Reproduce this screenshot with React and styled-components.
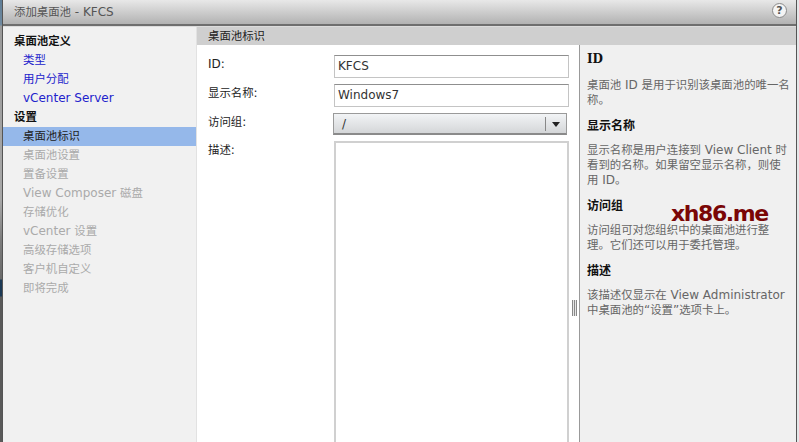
import React from "react";
import styled, { createGlobalStyle } from "styled-components";

const sans = `"DejaVu Sans", "Noto Sans CJK SC", sans-serif`;

const navItems = [
  { type: "head", text: "桌面池定义" },
  { type: "done", text: "类型" },
  { type: "done", text: "用户分配" },
  { type: "done", text: "vCenter Server" },
  { type: "head", text: "设置" },
  { type: "active", text: "桌面池标识" },
  { type: "off", text: "桌面池设置" },
  { type: "off", text: "置备设置" },
  { type: "off", text: "View Composer 磁盘" },
  { type: "off", text: "存储优化" },
  { type: "off", text: "vCenter 设置" },
  { type: "off", text: "高级存储选项" },
  { type: "off", text: "客户机自定义" },
  { type: "off", text: "即将完成" },
];

const helpItems = [
  { title: "ID", text: "桌面池 ID 是用于识别该桌面池的唯一名\n称。" },
  { title: "显示名称", text: "显示名称是用户连接到 View Client 时\n看到的名称。如果留空显示名称，则使\n用 ID。" },
  { title: "访问组", text: "访问组可对您组织中的桌面池进行整\n理。它们还可以用于委托管理。" },
  { title: "描述", text: "该描述仅显示在 View Administrator\n中桌面池的“设置”选项卡上。" },
];

// the Chinese glyphs are a little narrower than the latin text size
const T = ({ children }) =>
  children
    .split(/([\u4e00-\u9fff，。]+)/)
    .map((part, i) => (i % 2 ? <Zh key={i}>{part}</Zh> : part));

const App = () => {
  return (
    <Page>
      <GlobalStyle />
      <Dialog>
        <TitleBar>
          <Title>
            <T>添加桌面池 - KFCS</T>
          </Title>
          <HelpButton>?</HelpButton>
        </TitleBar>
        <Body>
          <Sidebar>
            {navItems.map((item) => (
              <NavItem key={item.text} $type={item.type}>
                <T>{item.text}</T>
              </NavItem>
            ))}
          </Sidebar>
          <Main>
            <SectionHeader>
              <T>桌面池标识</T>
            </SectionHeader>
            <Columns>
              <Form>
                <Label>ID:</Label>
                <TextField>KFCS</TextField>
                <Label>
                  <T>显示名称:</T>
                </Label>
                <TextField>Windows7</TextField>
                <Label>
                  <T>访问组:</T>
                </Label>
                <SelectBox>
                  <SelectValue>/</SelectValue>
                  <SelectArrow />
                </SelectBox>
                <Label>
                  <T>描述:</T>
                </Label>
                <TextArea />
              </Form>
              <Splitter>
                <Grip />
              </Splitter>
              <HelpPanel>
                {helpItems.map((item, i) => (
                  <div key={item.title}>
                    <HelpTitle $first={i === 0}>{item.title}</HelpTitle>
                    <HelpText>
                      <T>{item.text}</T>
                    </HelpText>
                  </div>
                ))}
                <Watermark>xh86.me</Watermark>
              </HelpPanel>
            </Columns>
          </Main>
        </Body>
      </Dialog>
    </Page>
  );
};

export default App;

const GlobalStyle = createGlobalStyle`
  html, body {
    margin: 0;
    padding: 0;
    height: 100%;
    overflow: hidden;
  }
  #root {
    height: 100%;
  }
`;

const Page = styled.div`
  height: 442px;
  width: 799px;
  padding: 0 2px 0 2px;
  box-sizing: border-box;
  background:
    linear-gradient(
        180deg,
        #5f7d96 0,
        #6f8aa0 25px,
        #9a9a9a 26px,
        #a8a8a8 200px,
        #7d7d7d 240px,
        #6a6a6a 279px,
        #1d3a56 280px,
        #1d3a56 296px,
        #5a5a5a 297px,
        #5a5a5a 100%
      )
      left / 2px 100% no-repeat,
    #e4e6e8;
  font-family: ${sans};
  font-size: 12px;
  overflow: hidden;
`;

const Zh = styled.span`
  font-size: 11.4px;
`;

const Dialog = styled.div`
  height: 570px;
  display: flex;
  flex-direction: column;
  border-left: 1px solid #555;
  border-right: 1px solid #555;
`;

const TitleBar = styled.div`
  height: 26px;
  flex: none;
  display: flex;
  align-items: center;
  justify-content: space-between;
  padding: 0 9px 3px 11px;
  box-sizing: border-box;
  background: linear-gradient(180deg, #e8e8e8 0%, #b2b2b2 100%);
  border-bottom: 2px solid #6e6e6e;
`;

const Title = styled.div`
  font-size: 12px;
  color: #555;
`;

const HelpButton = styled.div`
  width: 13px;
  height: 13px;
  border-radius: 50%;
  border: 1px solid #8a8a8a;
  background: #f4f4f4;
  color: #555;
  font-size: 11px;
  font-weight: bold;
  line-height: 13px;
  text-align: center;
`;

const Body = styled.div`
  flex: 1;
  display: flex;
  min-height: 0;
  border-top: 1px solid #dcdcdc;
`;

const Sidebar = styled.div`
  width: 193px;
  flex: none;
  padding-top: 5px;
  background: #f1f1f1;
  border-right: 1px solid #e2e2e2;
`;

const navColors = {
  head: "#111",
  done: "#2222cc",
  active: "#222",
  off: "#aaa",
};

const NavItem = styled.div`
  height: 19px;
  line-height: 19px;
  padding-left: ${(p) => (p.$type === "head" ? 11 : 20)}px;
  color: ${(p) => navColors[p.$type]};
  font-weight: ${(p) => (p.$type === "head" ? "bold" : "normal")};
  background: ${(p) => (p.$type === "active" ? "#95b8ea" : "transparent")};
`;

const Main = styled.div`
  flex: 1;
  min-width: 0;
  display: flex;
  flex-direction: column;
`;

const SectionHeader = styled.div`
  height: 18px;
  line-height: 18px;
  flex: none;
  padding-left: 11px;
  background: #cfcfcf;
  color: #222;
`;

const Columns = styled.div`
  flex: 1;
  display: flex;
  min-height: 0;
`;

const Form = styled.div`
  width: 372px;
  flex: none;
  box-sizing: border-box;
  padding: 10px 0 0 11px;
  display: grid;
  grid-template-columns: 126px 235px;
  grid-template-rows: 23px 23px 22px 1fr;
  row-gap: 6px;
  background: #fff;
`;

const Label = styled.div`
  color: #222;
  line-height: 19px;
`;

const TextField = styled.div`
  border: 1px solid #c4c4c4;
  border-top-color: #8f8f8f;
  padding-left: 3px;
  line-height: 21px;
  font-size: 12px;
  color: #333;
  background: #fff;
`;

const SelectBox = styled.div`
  display: flex;
  align-items: center;
  justify-content: space-between;
  margin: 0 2px 0 -1px;
  border: 1px solid #9a9a9a;
  border-bottom: 2px solid #8a8a8a;
  background: linear-gradient(180deg, #f2f4f6 0%, #d4d6d8 100%);
`;

const SelectValue = styled.span`
  padding-left: 8px;
  color: #333;
`;

const SelectArrow = styled.span`
  width: 20px;
  height: 14px;
  border-left: 1px solid #888;
  position: relative;
  &::after {
    content: "";
    position: absolute;
    left: 6px;
    top: 5px;
    border-left: 4px solid transparent;
    border-right: 4px solid transparent;
    border-top: 5px solid #222;
  }
`;

const TextArea = styled.div`
  border: 2px solid #d0d0d0;
  border-bottom: none;
  background: #fff;
`;

const Splitter = styled.div`
  width: 10px;
  flex: none;
  display: flex;
  align-items: center;
  justify-content: center;
  background: #fff;
`;

const Grip = styled.div`
  width: 5px;
  height: 16px;
  background: repeating-linear-gradient(90deg, #888 0 1px, #e6e6e6 1px 2px);
`;

const HelpPanel = styled.div`
  flex: 1;
  min-width: 0;
  position: relative;
  box-sizing: border-box;
  padding: 6px 6px 0 7px;
  background: #f0f0f0;
  border-left: 1px solid #999;
`;

const HelpTitle = styled.div`
  font-family: "DejaVu Serif", "Noto Sans CJK SC", serif;
  font-weight: bold;
  color: #111;
  line-height: 17px;
  margin-bottom: ${(p) => (p.$first ? 10 : 8)}px;
`;

const HelpText = styled.div`
  color: #666;
  line-height: 15px;
  margin-bottom: 10px;
  white-space: pre-line;
`;

const Watermark = styled.div`
  position: absolute;
  left: 91px;
  top: 156px;
  font-size: 22px;
  font-weight: bold;
  line-height: 26px;
  letter-spacing: -1.4px;
  color: #7a0606;
`;
